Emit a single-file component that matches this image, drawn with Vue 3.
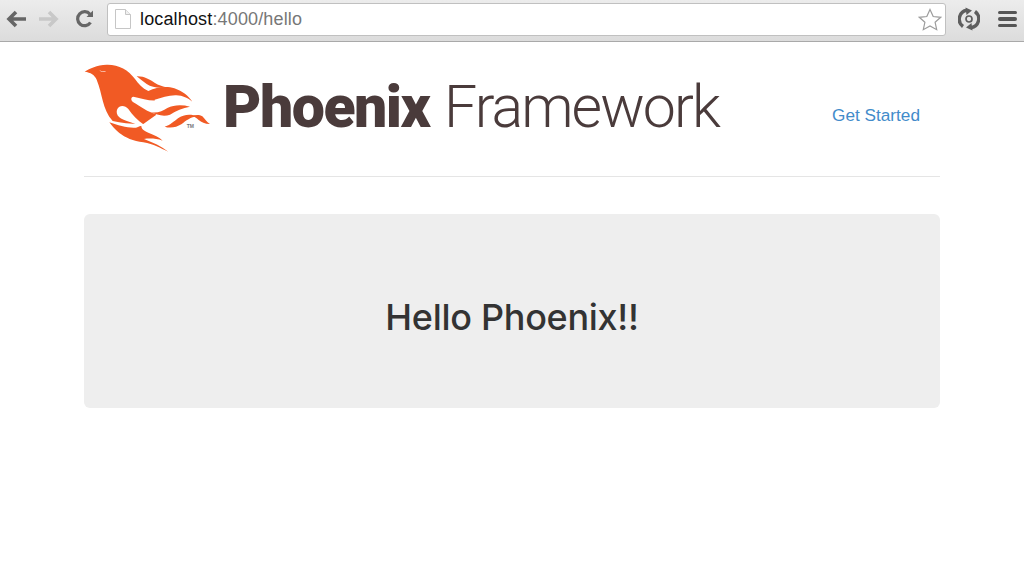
<script setup>
const page = {
  host: 'localhost',
  rest: ':4000/hello',
  link: 'Get Started',
  title: 'Hello Phoenix!!',
};
</script>

<template>
  <div class="browser">
    <div class="toolbar">
      <svg class="back" width="22" height="20" viewBox="0 0 22 20">
        <path d="M11 3 4 10l7 7M4.500 10H21" fill="none" stroke="#666" stroke-width="3.600" />
      </svg>
      <svg class="forward" width="22" height="20" viewBox="0 0 22 20">
        <path d="M11 3l7 7-7 7M17.500 10H1" fill="none" stroke="#c8c8c8" stroke-width="3.600" />
      </svg>
      <svg class="reload" width="20" height="20" viewBox="0 0 20 20">
        <path d="M15.500 13.500A7 7 0 1 1 15 5.200" fill="none" stroke="#666" stroke-width="3.200" />
        <path d="M11.500 8H18V1.500z" fill="#666" />
      </svg>
      <div class="address">
        <svg class="page-icon" width="16" height="20" viewBox="0 0 16 20">
          <path d="M.5.500h10l5 5v14H.5z" fill="#fff" stroke="#c6c6c6" />
          <path d="M10.500.500v5h5" fill="#f0f0f0" stroke="#c6c6c6" />
        </svg>
        <span class="url"><span class="host">{{ page.host }}</span>{{ page.rest }}</span>
        <svg class="star" width="24" height="23" viewBox="0 0 24 23">
          <path d="M12 1.500l3.200 7 7.500.8-5.600 5 1.600 7.400L12 18l-6.700 3.700 1.600-7.400-5.600-5 7.500-.8z" fill="#fff" stroke="#9c9c9c" stroke-width="1.200" />
        </svg>
      </div>
      <svg class="sync" width="22" height="24" viewBox="0 0 22 24">
        <path d="M5 19.500A9 9 0 0 1 9 3.300M17 4.500A9 9 0 0 1 13 20.700" fill="none" stroke="#5e5e5e" stroke-width="3.400" />
        <path d="M7.500.5l6.500 3-5.500 4.500zM14.500 23.500l-6.500-3 5.500-4.500z" fill="#5e5e5e" />
        <circle cx="11" cy="12" r="3" fill="none" stroke="#5e5e5e" stroke-width="1.700" />
      </svg>
      <div class="menu"><i></i><i></i><i></i></div>
    </div>

    <div class="container">
      <header class="header">
        <div class="logo">
          <svg class="bird" width="130" height="90" viewBox="12 15 390 270">
            <g fill="#f15a24">
              <path d="M14 38C30 28 50 18 80 17C115 16 145 32 165 60C175 74 187 88 205 96C230 84 260 80 283 88C308 97 325 110 337 128C323 117 309 110 289 109C267 108 245 117 224 122L228 168L190 195C160 196 125 192 98 186C66 150 68 105 50 62C44 48 32 40 14 38z" />
            </g>
            <path d="M160 113C190 118 215 130 240 122L245 165L228 166C205 160 180 142 160 130C152 124 152 114 160 113z" fill="#fff" />
            <path d="M112 150C118 138 135 138 145 150C158 168 172 185 192 197L186 203C155 190 130 185 118 175C110 168 108 158 112 150z" fill="#fff" />
            <g fill="#f15a24">
              <path d="M170 52c22-1 40 10 55 20 10 6 22 10 33 13-22 4-42 0-58-10-10-7-20-15-30-23z" />
              <path d="M212 160c22 3 36-4 50-13 20-10 45-10 68-4-22 3-42 13-60 24-18 7-40 1-58-7z" />
              <path d="M254 203c16-4 28-16 40-25 16-12 38-14 58-6-20 2-34 13-48 24-14 9-34 13-50 7z" />
              <path d="M336 171c10-4 22-5 31 1 8 8 12 17 23 23-16 0-26-5-34-12-7-6-12-10-20-12z" />
              <path d="M88 190C115 200 145 208 168 206C175 204 178 200 184 201C184 210 192 216 205 221C222 228 238 234 248 245C228 238 208 238 192 240C218 250 245 262 265 278C240 268 222 255 190 250C160 247 135 235 118 222C105 212 95 200 88 190z" />
            </g>
            <path d="M58 34c6 4 13 4 20 2-4 4-14 5-20-2z" fill="#fff" />
            <text class="tm" x="320" y="206">TM</text>
          </svg>
          <span class="wordmark"><b>Phoenix</b> <span>Framework</span></span>
        </div>
        <a class="started" href="#">{{ page.link }}</a>
      </header>
      <main class="jumbotron">
        <h2>{{ page.title }}</h2>
      </main>
    </div>
  </div>
</template>

<style scoped>
.browser {
  width: 1024px;
  height: 578px;
  overflow: hidden;
  background: #fff;
  font-family: "Liberation Sans", Arial, sans-serif;
}

.toolbar {
  display: flex;
  align-items: center;
  box-sizing: border-box;
  height: 42px;
  padding: 0 7px 3px 5px;
  background: linear-gradient(#ececec, #dcdcdc);
  border-bottom: 1px solid #a9a9a9;
}

.back {
  margin-right: 11px;
}

.forward {
  margin-right: 15px;
}

.reload {
  margin-right: 12px;
}

.address {
  display: flex;
  align-items: center;
  flex: 1;
  box-sizing: border-box;
  height: 33px;
  padding: 0 3px 0 7px;
  background: #fff;
  border: 1px solid #c0c0c0;
  border-radius: 3px;
}

.page-icon {
  margin-right: 9px;
}

.url {
  flex: 1;
  font-size: 18px;
  letter-spacing: 0.15px;
  color: #777;
}

.host {
  color: #111;
}

.sync {
  margin: 0 18px 0 12px;
}

.menu {
  display: flex;
  flex-direction: column;
  gap: 3px;
  width: 19px;
}

.menu i {
  height: 3.500px;
  border-radius: 2px;
  background: #555;
}

.container {
  box-sizing: border-box;
  width: 856px;
  margin: 0 auto;
}

.header {
  display: flex;
  align-items: center;
  justify-content: space-between;
  box-sizing: border-box;
  height: 135px;
  padding-right: 20px;
  border-bottom: 1px solid #e5e5e5;
}

.logo {
  display: flex;
  align-items: center;
  gap: 9px;
  margin-top: -1px;
}

.tm {
  font-size: 15px;
  font-weight: 700;
  fill: #777;
}

.wordmark {
  margin-top: -5px;
  font-family: Roboto, sans-serif;
  font-size: 59px;
  line-height: 1;
  color: #4a3b3b;
  white-space: nowrap;
}

.wordmark b {
  font-weight: 900;
  letter-spacing: -1.500px;
}

.wordmark span {
  font-weight: 300;
  letter-spacing: -1.900px;
}

.started {
  margin-top: 13px;
  font-size: 17.200px;
  color: #428bca;
  text-decoration: none;
}

.jumbotron {
  display: flex;
  align-items: center;
  justify-content: center;
  box-sizing: border-box;
  height: 194px;
  margin-top: 37px;
  padding-top: 12px;
  background: #eee;
  border-radius: 6px;
}

h2 {
  margin: 0;
  font-family: Inter, "Liberation Sans", sans-serif;
  font-size: 36px;
  font-weight: 500;
  letter-spacing: -0.300px;
  color: #333;
}
</style>
